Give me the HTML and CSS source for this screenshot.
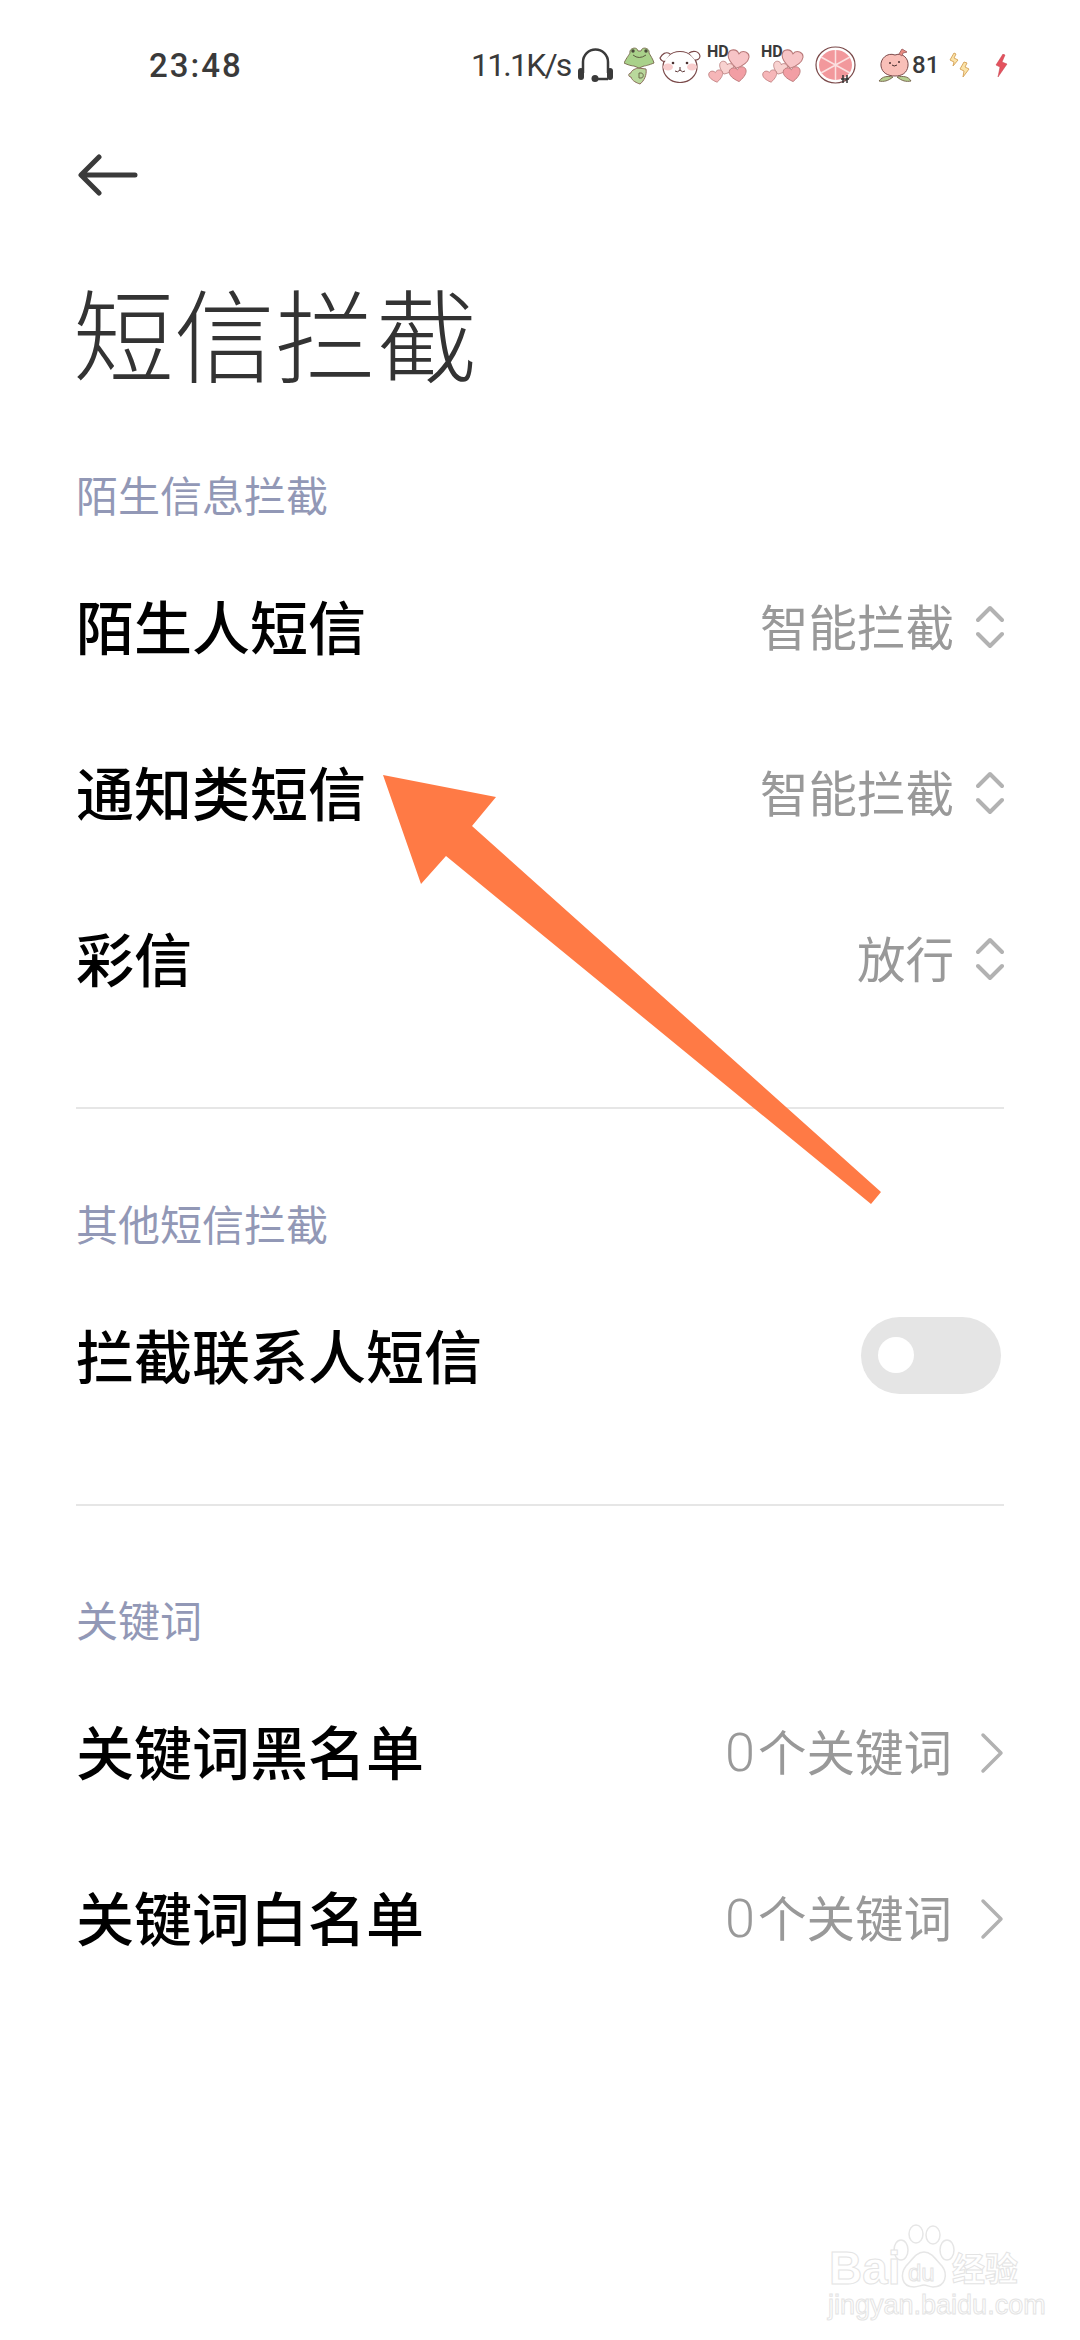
FILE: index.html
```html
<!DOCTYPE html>
<html lang="zh-CN">
<head>
  <meta charset="UTF-8">
  <meta name="viewport" content="width=device-width, initial-scale=1.0">
  <title>短信拦截</title>
  <link rel="stylesheet" href="styles.css">
</head>
<body>
  <div class="page">
    <!-- Shared sticker shapes -->
    <svg class="defs" width="0" height="0">
      <symbol id="hearts" viewBox="0 0 43 36">
        <g stroke="#b87878" stroke-width="1">
          <path transform="translate(31 12) rotate(10) scale(1.05)" d="M0 9C-8 4-10 0-10-3c0-5 7-7 10-2 3-5 10-3 10 2 0 3-2 7-10 12z" fill="#f7c4c6"/>
          <path transform="translate(19 21) rotate(20) scale(.72)" d="M0 9C-8 4-10 0-10-3c0-5 7-7 10-2 3-5 10-3 10 2 0 3-2 7-10 12z" fill="#f8d2d0"/>
          <path transform="translate(9 29) rotate(-10) scale(.7)" d="M0 9C-8 4-10 0-10-3c0-5 7-7 10-2 3-5 10-3 10 2 0 3-2 7-10 12z" fill="#f6b6b8"/>
          <path transform="translate(31 27) rotate(-8) scale(.85)" d="M0 9C-8 4-10 0-10-3c0-5 7-7 10-2 3-5 10-3 10 2 0 3-2 7-10 12z" fill="#f29ea4"/>
        </g>
      </symbol>
      <symbol id="updown" viewBox="0 0 28 44">
        <path d="M2 15L14 3l12 12M2 29l12 12 12-12" fill="none" stroke="#b2b2b2" stroke-width="4" stroke-linecap="round" stroke-linejoin="round"/>
      </symbol>
      <symbol id="chevron" viewBox="0 0 24 42">
        <path d="M3 3l18 18L3 39" fill="none" stroke="#b2b2b2" stroke-width="3.5" stroke-linecap="round" stroke-linejoin="round"/>
      </symbol>
    </svg>

    <!-- Status bar -->
    <div class="status-bar">
      <span class="clock">23:48</span>
      <div class="status-right">
        <span class="speed">11.1K/s</span>
        <svg class="ic-headset" width="35" height="34" viewBox="0 0 35 34"><path d="M5 25V14a12.500 12.500 0 0 1 25 0v11" fill="none" stroke="#3a3a3a" stroke-width="2.5"/><rect x="0" y="20" width="6" height="12" rx="3" fill="#3a3a3a"/><rect x="29" y="20" width="6" height="12" rx="3" fill="#3a3a3a"/><path d="M15 31h15" stroke="#3a3a3a" stroke-width="2.5"/><circle cx="17" cy="30.500" r="3.500" fill="#3a3a3a"/></svg>
        <svg class="ic-frog" width="31" height="39" viewBox="0 0 31 39"><path d="M14 22c-4 1-7 3-7 5-3 0-3 4 0 4 1 4 6 6 9 7 4-3 7-9 6-15z" fill="#b9d89c" stroke="#8a6a5a"/><path d="M0 17C3 11 5 9 6 7c-1-5 7-7 8-2h3c1-5 9-3 8 2 1 2 4 6 5 10-5 2-9 3-10 3l-5 2-5-2c-2 0-6-1-10-3z" fill="#a9d18a" stroke="#7f7256"/><circle cx="9" cy="5" r="1.700" fill="#4a4a3a"/><circle cx="22" cy="5" r="1.700" fill="#4a4a3a"/><path d="M9 9q6 5 13 0" fill="none" stroke="#5c5c40"/><path d="M15 27h2c3 0 3 5 0 5h-2z" fill="none" stroke="#6b6a4a"/></svg>
        <svg class="ic-cat" width="42" height="36" viewBox="0 0 42 36"><ellipse cx="21" cy="20" rx="17" ry="15.500" fill="#fff" stroke="#7b4a4a" stroke-width="1.200"/><path d="M11 7C7 4 3 7 1 11c1 3 4 4 5 3M30 6c4-3 10-2 11 3 0 3-3 4-5 4" fill="#fff" stroke="#7b4a4a" stroke-width="1.200"/><ellipse cx="9" cy="20" rx="5" ry="3.500" fill="#f8cdcd"/><ellipse cx="33" cy="20" rx="5" ry="3.500" fill="#f8cdcd"/><circle cx="14" cy="16" r="1.300" fill="#4a3030"/><circle cx="28" cy="16" r="1.300" fill="#4a3030"/><path d="M16 24q2.500 2 5-1q2.500 3 5 1M21 23v-3" fill="none" stroke="#5a3434"/></svg>
        <div class="hd-hearts">
          <span class="hd">HD</span>
          <svg width="43" height="36"><use href="#hearts"/></svg>
        </div>
        <div class="hd-hearts">
          <span class="hd">HD</span>
          <svg width="43" height="36"><use href="#hearts"/></svg>
        </div>
        <svg class="ic-fruit" width="41" height="38" viewBox="0 0 41 38"><ellipse cx="20.500" cy="19" rx="19.500" ry="18" fill="#fff" stroke="#7b4a4a" stroke-width="1.200"/><ellipse cx="20.500" cy="19" rx="16.500" ry="15" fill="#f2989c"/><path d="M20.500 4v30M6 11l29 16M6 27l29-16" stroke="#fbe0e0" stroke-width="1.500"/><path d="M28 29v8M32 29v8M26 33h8" stroke="#333" stroke-width="1.500"/></svg>
        <svg class="ic-peach" width="34" height="34" viewBox="0 0 34 34"><path d="M17 7c8-3 14 4 13 11-1 7-6 10-13 10S4 25 3 18C2 11 9 4 17 7z" fill="#f9bfb8" stroke="#7b4a4a"/><path d="M21 6l3-5 5 3-4 1-1 3z" fill="#e98a80" stroke="#a86a6a"/><path d="M1 33c4-5 8-5 14-4-5 4-9 5-14 4zM33 33c-3-5-8-5-14-4 5 4 9 5 14 4z" fill="#b6cf8f" stroke="#7a6a50"/><circle cx="12" cy="15" r="1" fill="#4a3030"/><circle cx="21" cy="14" r="1" fill="#4a3030"/><path d="M14 17q2 2 5 0" fill="none" stroke="#4a3030"/></svg>
        <span class="battery-num">81</span>
        <svg class="ic-bolts" width="22" height="26" viewBox="0 0 22 26"><path d="M5 1L1 8l4 2-1 4 5-6-4-2 2-4z" fill="#fbe3a8" stroke="#d8a860"/><path d="M15 10l-4 7 4 2-1 6 6-8-4-2 2-4z" fill="#fbe3a8" stroke="#d8a860"/></svg>
        <svg class="ic-bolt" width="13" height="23" viewBox="0 0 13 23"><path d="M8 0L1 11l4 2-2 10 9-13-5-2 3-7z" fill="#e4525e" stroke="#c2404c" stroke-width=".5"/></svg>
      </div>
    </div>

    <!-- Title -->
    <div class="toolbar">
      <svg class="back" width="60" height="42" viewBox="0 0 60 42"><path d="M57 21H4M21 3L3 21l18 18" fill="none" stroke="#3a3a3a" stroke-width="5" stroke-linecap="round" stroke-linejoin="round"/></svg>
    </div>
    <h1 class="page-title">短信拦截</h1>

    <section class="group">
      <h2 class="group-head">陌生信息拦截</h2>
      <div class="row">
        <span class="row-label">陌生人短信</span>
        <span class="row-value">智能拦截</span>
        <svg class="updown" width="28" height="44"><use href="#updown"/></svg>
      </div>
      <div class="row">
        <span class="row-label">通知类短信</span>
        <span class="row-value">智能拦截</span>
        <svg class="updown" width="28" height="44"><use href="#updown"/></svg>
      </div>
      <div class="row">
        <span class="row-label">彩信</span>
        <span class="row-value">放行</span>
        <svg class="updown" width="28" height="44"><use href="#updown"/></svg>
      </div>
    </section>

    <section class="group group-mid">
      <h2 class="group-head">其他短信拦截</h2>
      <div class="row">
        <span class="row-label">拦截联系人短信</span>
        <div class="switch"><span class="knob"></span></div>
      </div>
    </section>

    <section class="group group-last">
      <h2 class="group-head">关键词</h2>
      <div class="row">
        <span class="row-label">关键词黑名单</span>
        <span class="row-value"><span class="num">0</span>个关键词</span>
        <svg class="chev" width="24" height="42"><use href="#chevron"/></svg>
      </div>
      <div class="row">
        <span class="row-label">关键词白名单</span>
        <span class="row-value"><span class="num">0</span>个关键词</span>
        <svg class="chev" width="24" height="42"><use href="#chevron"/></svg>
      </div>
    </section>

    <!-- Annotation arrow drawn over the list -->
    <svg class="arrow" width="510" height="440" viewBox="0 0 510 440"><polygon points="3,5 116,27 92,56 501,422 491,434 66,86 41,114" fill="#ff7a45"/></svg>

    <!-- Watermark -->
    <div class="watermark">
      <svg class="wm-paw" width="64" height="66" viewBox="0 0 64 66"><g fill="#fff" stroke="#e6e6e6" stroke-width="1.5"><ellipse cx="9" cy="26" rx="7" ry="10"/><ellipse cx="24" cy="10" rx="7" ry="9"/><ellipse cx="41" cy="11" rx="7" ry="9"/><ellipse cx="55" cy="26" rx="7" ry="10"/><path d="M32 28c8 0 12 8 18 14 6 8 4 21-9 21-4 0-6-2-9-2s-6 2-10 2C9 63 8 50 14 42c6-6 10-14 18-14z"/></g></svg>
      <span class="wm-bai">Bai</span>
      <span class="wm-du">du</span>
      <span class="wm-cn">经验</span>
      <span class="wm-url">jingyan.baidu.com</span>
    </div>
  </div>
</body>
</html>
```

FILE: styles.css
```css
/* General Styles */
* {
  box-sizing: border-box;
}
body {
  margin: 0;
  background: #ffffff;
  font-family: "Noto Sans CJK SC", "Noto Sans", sans-serif;
}
.page {
  position: relative;
  width: 1080px;
  height: 2340px;
  overflow: hidden;
  background: #ffffff;
}
.defs {
  position: absolute;
}
/* Status bar */
.status-bar {
  height: 130px;
  padding: 0 72px 0 149px;
  display: flex;
  align-items: center;
  justify-content: space-between;
  font-family: Roboto, sans-serif;
  color: #3a3a3a;
}
.status-bar svg {
  flex: none;
}
.clock {
  font-size: 33px;
  font-weight: 500;
  letter-spacing: 2px;
}
.status-right {
  display: flex;
  align-items: center;
}
.speed {
  width: 98px;
  font-size: 32px;
  letter-spacing: -1.8px;
  white-space: nowrap;
}
.ic-headset {
  margin-left: 9px;
}
.ic-frog {
  margin-left: 11px;
}
.ic-cat {
  margin-left: 4px;
}
.hd-hearts {
  position: relative;
  margin-left: 6px;
  width: 43px;
  height: 36px;
}
.hd-hearts + .hd-hearts {
  margin-left: 11px;
}
.hd {
  position: absolute;
  left: 0;
  top: -3px;
  font-size: 16px;
  font-weight: 700;
  line-height: 1;
}
.ic-fruit {
  margin-left: 11px;
}
.ic-peach {
  margin-left: 22px;
}
.battery-num {
  width: 22px;
  font-size: 24px;
  font-weight: 500;
}
.ic-bolts {
  margin-left: 15px;
}
.ic-bolt {
  margin-left: 24px;
}
/* Toolbar and title */
.toolbar {
  height: 90px;
  padding-left: 78px;
  display: flex;
  align-items: center;
}
.page-title {
  margin: 0;
  height: 239px;
  padding-left: 73px;
  font-size: 101px;
  font-weight: 300;
  line-height: 222px;
  color: #333333;
}
/* Groups */
.group {
  margin: 0 76px;
  padding-bottom: 67px;
  border-bottom: 2px solid #e6e6e6;
}
.group-mid {
  margin-top: 79px;
}
.group-last {
  margin-top: 78px;
  border-bottom: none;
}
.group-head {
  margin: 0 0 13px;
  height: 70px;
  font-size: 42px;
  font-weight: 400;
  line-height: 70px;
  color: #9298b6;
}
.row {
  height: 166px;
  display: flex;
  align-items: center;
}
.row-label {
  flex: 1;
  font-size: 58px;
  font-weight: 500;
  color: #000000;
}
.row-value {
  font-size: 48.5px;
  color: #999999;
}
.num {
  margin-right: 3px;
  font-family: Roboto, sans-serif;
  font-size: 54px;
  font-weight: 300;
}
.updown {
  margin-left: 22px;
  margin-top: 4px;
}
.chev {
  margin-left: 28px;
  margin-top: 6px;
}
.switch {
  position: relative;
  width: 140px;
  height: 77px;
  margin-right: 3px;
  margin-top: 3px;
  border-radius: 39px;
  background: #e5e5e5;
}
.knob {
  position: absolute;
  left: 17px;
  top: 20px;
  width: 36px;
  height: 36px;
  border-radius: 50%;
  background: #ffffff;
}
/* Arrow overlay */
.arrow {
  position: absolute;
  left: 380px;
  top: 770px;
}
/* Watermark */
.watermark {
  position: absolute;
  left: 826px;
  top: 2224px;
  width: 200px;
  height: 96px;
}
.wm-paw {
  position: absolute;
  left: 66px;
  top: 0;
}
.wm-bai, .wm-du, .wm-cn, .wm-url {
  position: absolute;
  color: #ffffff;
  -webkit-text-stroke: 1px #e4e4e4;
  font-family: "Liberation Sans", sans-serif;
  line-height: 1;
}
.wm-bai {
  left: 3px;
  top: 21px;
  font-size: 46px;
  font-weight: 700;
}
.wm-du {
  left: 82px;
  top: 37px;
  font-size: 24px;
}
.wm-cn {
  left: 126px;
  top: 27px;
  font-family: "Noto Sans CJK SC", sans-serif;
  font-size: 33px;
  font-weight: 700;
}
.wm-url {
  left: 2px;
  top: 68px;
  font-size: 27px;
}
```
